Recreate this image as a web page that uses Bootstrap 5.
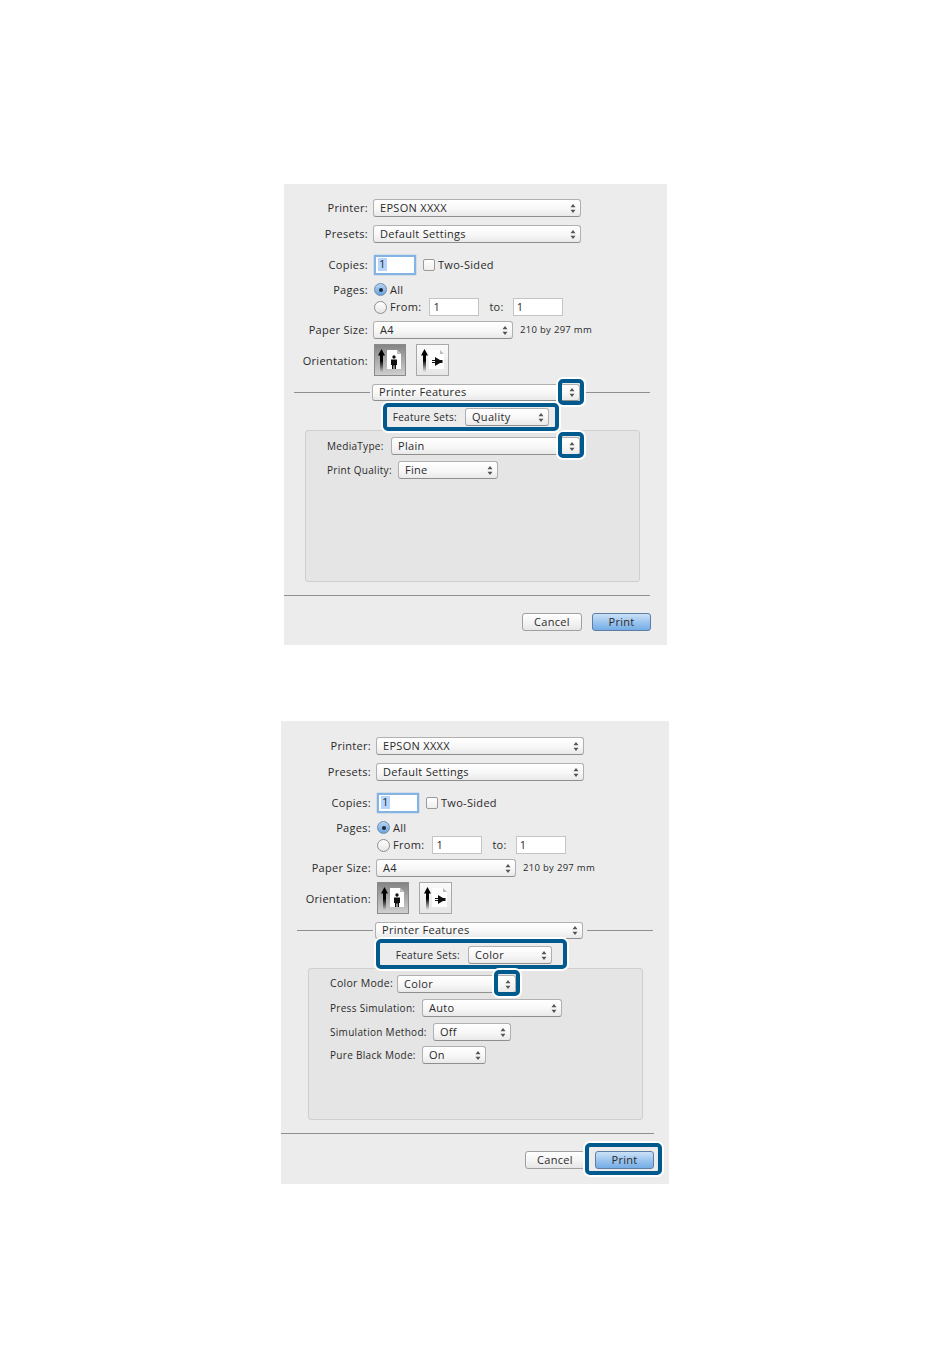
<!DOCTYPE html>
<html lang="en">
<head>
    <meta charset="UTF-8">
    <title>Print dialogs</title>
    <link href="https://cdn.jsdelivr.net/npm/bootstrap@5.3.0/dist/css/bootstrap.min.css" rel="stylesheet">
    <style>
        body { background: #fff; font-family: "Open Sans", "Noto Sans", sans-serif; font-size: 11px; color: #2a2a2a; letter-spacing: .3px; line-height: 1; }
        .dlg { background: #ececec; padding-top: 15px; }
        .dlg-a { width: 383px; height: 461px; margin: 184px 0 0 284px; padding-left: 10px; }
        .dlg-b { width: 388px; height: 463px; margin: 76px 0 0 281px; padding-left: 16px; padding-top: 16px; }
        .frm { width: 356px; }
        .frow { display: flex; align-items: center; height: 18px; }
        .frow > span, .msel > span, .mbtn > span { padding-bottom: 1px; }
        .lbl { width: 74px; margin-right: 5px; text-align: right; white-space: nowrap; flex: none; }
        .ori-row > .lbl { padding-bottom: 0; padding-top: 1px; }
        .mt-5px { margin-top: 5px; }
        .mt-8px { margin-top: 8px; }
        .msel { height: 18px; flex: none; display: flex; align-items: center; justify-content: space-between; padding: 0 4px 0 6px; background: linear-gradient(#fff, #f7f7f7 55%, #e9e9e9); border: 1px solid #b0b0b0; border-bottom-color: #8f8f8f; border-radius: 3px; position: relative; white-space: nowrap; }
        .sw-208 { width: 208px; }
        .sw-140 { width: 140px; }
        .sw-84 { width: 84px; }
        .sw-189 { width: 189px; }
        .sw-100 { width: 100px; }
        .sw-119 { width: 119px; }
        .sw-78 { width: 78px; }
        .sw-64 { width: 64px; }
        .copies-row { height: 20px; margin-top: 12px; }
        .copies { width: 42px; height: 20px; margin-left: 1px; background: #fff; border: 2px solid #84b4e4; box-shadow: 0 0 1px #5c94d0; padding: 1px 2px; font-size: 11.5px; }
        .copies span { background: #b5d5ff; padding: 0 1px; display: inline-block; height: 13px; }
        .chk { width: 12px; height: 12px; border: 1px solid #9a9a9a; border-radius: 2px; background: linear-gradient(#fff, #eee); margin: 0 3px 0 7px; flex: none; }
        .pages-row { height: 17px; margin-top: 6px; }
        .radio { width: 13px; height: 13px; border-radius: 50%; border: 1px solid #8f8f8f; background: linear-gradient(#fff, #e6e6e6); margin: 0 3px 0 1px; flex: none; display: flex; align-items: center; justify-content: center; }
        .radio.on { background: linear-gradient(#b6d3f2, #6da3dc); border-color: #6b8cb0; }
        .radio.on::after { content: ""; width: 4px; height: 4px; border-radius: 50%; background: #1c2a3c; }
        .pg-in { width: 50px; height: 18px; background: #fff; border: 1px solid #c4c4c4; padding: 2px 3px; }
        .ml-label { margin-left: 8px; }
        .to-lbl { margin: 0 9px 0 10px; }
        .size-note { margin-left: 7px; font-size: 9.5px; }
        .ori-row { height: 32px; }
        .ori { width: 33px; height: 32px; border: 1px solid #a8a8a8; flex: none; }
        .ori-on { width: 32px; margin-left: 1px; background: linear-gradient(#858585, #cfcfcf); border-color: #8a8a8a; }
        .ori-off { margin-left: 10px; background: linear-gradient(#fafafa, #e6e6e6); }
        .ori svg { display: block; }
        .feat-row { margin-top: 8px; height: 16px; }
        .feat-row .msel { height: 17px; margin: 0 4px 0 2px; }
        .rule { height: 1px; background: #8f8f8f; }
        .rule-l { width: 76px; flex: none; }
        .rule-r { flex-grow: 1; }
        .fs-row { position: relative; margin-top: 8px; }
        .fs-lbl { width: 163px; margin-right: 8px; text-align: right; flex: none; font-size: 10px; }
        .panel { margin: 4px 0 0 11px; width: 335px; height: 152px; background: #e5e5e5; border: 1px solid #cfcfcf; border-radius: 3px; padding: 6px 0 0 21px; }
        .panel .frow:not(:first-child) { margin-top: 6px; }
        .panel .frow.pb { margin-top: 5px; }
        .plb { flex: none; white-space: nowrap; font-size: 10px; }
        .pl-1 { width: 64px; }
        .pl-2 { width: 71px; }
        .pl-3 { width: 67px; font-size: 10.5px; }
        .pl-4 { width: 92px; }
        .pl-5 { width: 103px; }
        .pl-6 { width: 92px; }
        .sep { height: 1px; background: #8f8f8f; margin-top: 13px; }
        .dlg-a .sep { margin-left: -10px; width: 366px; }
        .dlg-b .sep { margin-left: -16px; width: 373px; }
        .acts { margin-top: 17px; height: 18px; justify-content: flex-end; margin-right: -1px; gap: 10px; }
        .mbtn { width: 60px; height: 18px; border: 1px solid #a0a0a0; border-radius: 3px; background: linear-gradient(#fff, #f3f3f3 55%, #e6e6e6); display: flex; align-items: center; justify-content: center; position: relative; }
        .mbtn.go { background: linear-gradient(#cbe1f7, #9cc5ef 50%, #74ade6); border-color: #5d7ea5; width: 59px; }
        /* callouts drawn over the dialog */
        .hl { position: absolute; border: 4px solid #005a8e; border-radius: 5px; box-shadow: 0 0 0 2px #fff; pointer-events: none; }
        .hl-step { top: -6px; right: -5px; width: 26px; height: 26px; }
        .hl-fs-a { left: 89px; top: -5px; width: 176px; height: 28px; }
        .hl-fs-b { left: 79px; top: -7px; width: 191px; height: 30px; }
        .hl-print { left: -11px; right: -9px; top: -9px; bottom: -7px; }
    </style>
</head>
<body>

<svg width="0" height="0" class="position-absolute">
    <defs>
        <symbol id="step" viewBox="0 0 6 11"><path d="M3 1 5.500 4.300H.5zM3 10 .5 6.700h5z" fill="#555"/></symbol>
        <linearGradient id="shaft" gradientUnits="userSpaceOnUse" x1="0" y1="4" x2="0" y2="27"><stop offset="0" stop-color="#000"/><stop offset=".5" stop-color="#000"/><stop offset="1" stop-color="#000" stop-opacity="0"/></linearGradient>
        <symbol id="ori-up" viewBox="0 0 30 30">
            <path d="M6.500 4 10 10.500H8V27H5V10.500H3z" fill="url(#shaft)"/>
            <path d="M12 5h10l4 4v15H12z" fill="#fff"/>
            <path d="M22 5v4h4z" fill="#bbb"/>
            <circle cx="19" cy="12" r="1.700" fill="#111"/>
            <path d="M16 14.500h6V20h-1v4h-1.500v-3.500h-1V24H17v-4h-1z" fill="#111"/>
        </symbol>
        <symbol id="ori-side" viewBox="0 0 31 30">
            <path d="M7.500 4 11 10.500H9V27H6V10.500H4z" fill="url(#shaft)"/>
            <path d="M12 5h11l4 4v15H12z" fill="#fff"/>
            <path d="M23 5v4h4z" fill="#bbb"/>
            <path d="M18 12l5 3h2.500v3H23l-5 3v-3h-3v-1h3v-1h-3v-1h3z" fill="#111"/>
        </symbol>
    </defs>
</svg>

<div class="dlg dlg-a">
    <div class="frm">
        <div class="frow"><span class="lbl">Printer:</span><div class="msel sw-208"><span>EPSON XXXX</span><svg width="6" height="11"><use href="#step"/></svg></div></div>
        <div class="frow mt-8px"><span class="lbl">Presets:</span><div class="msel sw-208"><span>Default Settings</span><svg width="6" height="11"><use href="#step"/></svg></div></div>
        <div class="frow copies-row"><span class="lbl">Copies:</span><div class="copies"><span>1</span></div><div class="chk"></div><span>Two-Sided</span></div>
        <div class="frow pages-row"><span class="lbl">Pages:</span><div class="radio on"></div><span>All</span></div>
        <div class="frow"><span class="lbl"></span><div class="radio"></div><span>From:</span><div class="pg-in ml-label">1</div><span class="to-lbl">to:</span><div class="pg-in">1</div></div>
        <div class="frow mt-5px"><span class="lbl">Paper Size:</span><div class="msel sw-140"><span>A4</span><svg width="6" height="11"><use href="#step"/></svg></div><span class="size-note">210 by 297 mm</span></div>
        <div class="frow ori-row mt-5px"><span class="lbl">Orientation:</span><div class="ori ori-on"><svg width="30" height="30"><use href="#ori-up"/></svg></div><div class="ori ori-off"><svg width="31" height="30"><use href="#ori-side"/></svg></div></div>
        <div class="frow feat-row"><div class="rule rule-l"></div><div class="msel sw-208"><span>Printer Features</span><svg width="6" height="11"><use href="#step"/></svg><div class="hl hl-step"></div></div><div class="rule rule-r"></div></div>
        <div class="frow fs-row"><span class="fs-lbl">Feature Sets:</span><div class="msel sw-84"><span>Quality</span><svg width="6" height="11"><use href="#step"/></svg></div><div class="hl hl-fs-a"></div></div>
        <div class="panel">
            <div class="frow"><span class="plb pl-1">MediaType:</span><div class="msel sw-189"><span>Plain</span><svg width="6" height="11"><use href="#step"/></svg><div class="hl hl-step"></div></div></div>
            <div class="frow"><span class="plb pl-2">Print Quality:</span><div class="msel sw-100"><span>Fine</span><svg width="6" height="11"><use href="#step"/></svg></div></div>
        </div>
        <div class="sep"></div>
        <div class="frow acts"><div class="mbtn"><span>Cancel</span></div><div class="mbtn go"><span>Print</span></div></div>
    </div>
</div>

<div class="dlg dlg-b">
    <div class="frm">
        <div class="frow"><span class="lbl">Printer:</span><div class="msel sw-208"><span>EPSON XXXX</span><svg width="6" height="11"><use href="#step"/></svg></div></div>
        <div class="frow mt-8px"><span class="lbl">Presets:</span><div class="msel sw-208"><span>Default Settings</span><svg width="6" height="11"><use href="#step"/></svg></div></div>
        <div class="frow copies-row"><span class="lbl">Copies:</span><div class="copies"><span>1</span></div><div class="chk"></div><span>Two-Sided</span></div>
        <div class="frow pages-row"><span class="lbl">Pages:</span><div class="radio on"></div><span>All</span></div>
        <div class="frow"><span class="lbl"></span><div class="radio"></div><span>From:</span><div class="pg-in ml-label">1</div><span class="to-lbl">to:</span><div class="pg-in">1</div></div>
        <div class="frow mt-5px"><span class="lbl">Paper Size:</span><div class="msel sw-140"><span>A4</span><svg width="6" height="11"><use href="#step"/></svg></div><span class="size-note">210 by 297 mm</span></div>
        <div class="frow ori-row mt-5px"><span class="lbl">Orientation:</span><div class="ori ori-on"><svg width="30" height="30"><use href="#ori-up"/></svg></div><div class="ori ori-off"><svg width="31" height="30"><use href="#ori-side"/></svg></div></div>
        <div class="frow feat-row"><div class="rule rule-l"></div><div class="msel sw-208"><span>Printer Features</span><svg width="6" height="11"><use href="#step"/></svg></div><div class="rule rule-r"></div></div>
        <div class="frow fs-row"><span class="fs-lbl">Feature Sets:</span><div class="msel sw-84"><span>Color</span><svg width="6" height="11"><use href="#step"/></svg></div><div class="hl hl-fs-b"></div></div>
        <div class="panel">
            <div class="frow"><span class="plb pl-3">Color Mode:</span><div class="msel sw-119"><span>Color</span><svg width="6" height="11"><use href="#step"/></svg><div class="hl hl-step"></div></div></div>
            <div class="frow"><span class="plb pl-4">Press Simulation:</span><div class="msel sw-140"><span>Auto</span><svg width="6" height="11"><use href="#step"/></svg></div></div>
            <div class="frow"><span class="plb pl-5">Simulation Method:</span><div class="msel sw-78"><span>Off</span><svg width="6" height="11"><use href="#step"/></svg></div></div>
            <div class="frow pb"><span class="plb pl-6">Pure Black Mode:</span><div class="msel sw-64"><span>On</span><svg width="6" height="11"><use href="#step"/></svg></div></div>
        </div>
        <div class="sep"></div>
        <div class="frow acts"><div class="mbtn"><span>Cancel</span></div><div class="mbtn go"><span>Print</span><div class="hl hl-print"></div></div></div>
    </div>
</div>

<script src="https://cdn.jsdelivr.net/npm/bootstrap@5.3.0/dist/js/bootstrap.bundle.min.js"></script>
</body>
</html>
